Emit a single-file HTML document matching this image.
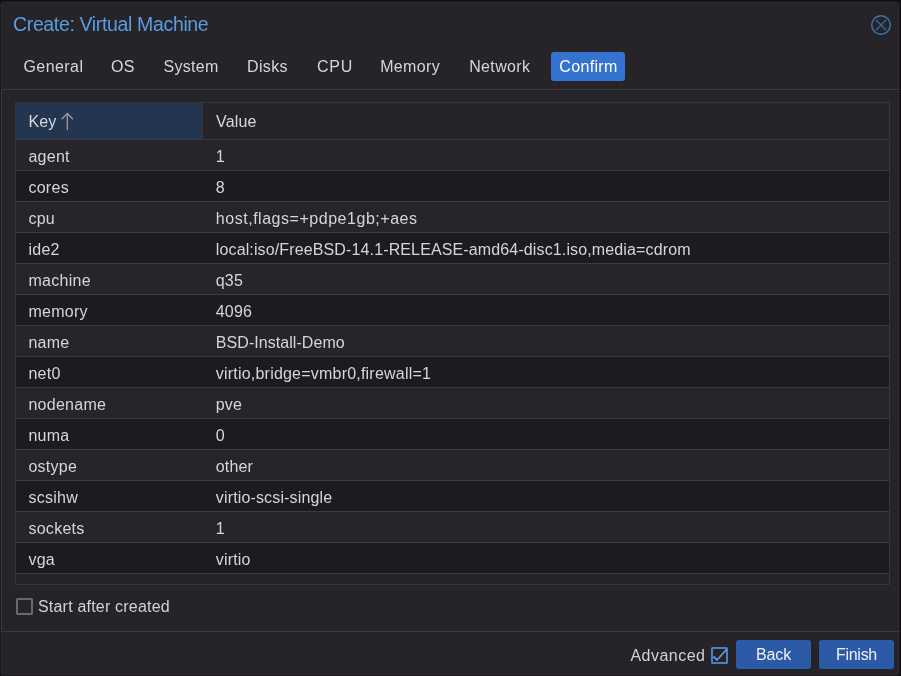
<!DOCTYPE html>
<html><head><meta charset="utf-8">
<style>
*{margin:0;padding:0;box-sizing:border-box}
html,body{width:901px;height:676px;overflow:hidden;background:#0f0e11;font-family:"Liberation Sans",sans-serif}
#root{position:absolute;left:0;top:0;width:901px;height:676px;will-change:transform}
.win{position:absolute;left:0;top:1px;width:900px;height:675px;background:#1c1b1e;border-radius:4px}
.hl{position:absolute;left:1px;top:2px;width:898px;height:673px;background:#2a282c;border-radius:3px}
.inner{position:absolute;left:2px;top:3px;width:896px;height:671px;background:#262428;border-radius:2px}
.abs{position:absolute;white-space:nowrap}
.title{left:13px;top:13px;font-size:19.5px;letter-spacing:-0.35px;color:#5a9cdf;line-height:22px}
.close{left:871px;top:15px;width:20px;height:20px}
.tab{top:52px;height:29px;line-height:29px;font-size:16px;letter-spacing:0.35px;color:#d6d6d6}
.tab.active{background:#3474d0;color:#fff;border-radius:3px;left:551px;width:74px;text-align:center;padding-left:1px}
.hline{position:absolute;height:1px;background:#3c3a3e}
.vline{position:absolute;width:1px;background:#3c3a3e}
.grid{position:absolute;left:15px;top:102px;width:875px;height:483px;border:1px solid #363438;background:#262428}
.hdr{position:absolute;left:0;top:0;width:873px;height:37px;border-bottom:1px solid #3c3a3e}
.hkey{position:absolute;left:0;top:0;width:186px;height:36px;background:#243550}
.hdiv{position:absolute;left:186px;top:0;width:1px;height:36px;background:#363438}
.row{position:absolute;left:0;width:873px;height:31px;border-bottom:1px solid #3c3a3e;font-size:16px;color:#d6d6d6;letter-spacing:0.15px}
.row.o{background:#272529}
.row.e{background:#1d1b1f}
.row span{position:absolute;top:2px;line-height:30px}
.row .k{left:12.4px;letter-spacing:0.28px}
.row .v{left:199.8px}
.htext{position:absolute;top:0;line-height:36px;font-size:16px;color:#d8d8d8;letter-spacing:0.15px}
.cb{position:absolute;width:17px;height:17px;border:2px solid #6a686c;border-radius:1.5px}
.btn{position:absolute;top:640px;width:75px;height:29px;background:#2b5ba6;border-radius:3px;color:#f0f0f0;font-size:16px;line-height:30px;text-align:center;letter-spacing:0.2px}
</style></head><body>
<div id="root">
<div class="win"></div>
<div class="hl"></div>
<div class="inner"></div>
<div class="abs title">Create: Virtual Machine</div>
<svg class="abs close" viewBox="0 0 20 20"><circle cx="10" cy="10" r="9.3" fill="none" stroke="#3c75b0" stroke-width="1.4"/><path d="M5 5L15 15M15 5L5 15" stroke="#37669c" stroke-width="1.4"/></svg>
<div class="abs tab" style="left:23.4px;letter-spacing:0.45px">General</div>
<div class="abs tab" style="left:111px">OS</div>
<div class="abs tab" style="left:163.5px;letter-spacing:0.3px">System</div>
<div class="abs tab" style="left:247px">Disks</div>
<div class="abs tab" style="left:317px;letter-spacing:0.7px">CPU</div>
<div class="abs tab" style="left:380.2px">Memory</div>
<div class="abs tab" style="left:469.2px">Network</div>
<div class="abs tab active">Confirm</div>
<div class="hline" style="left:1px;top:89px;width:898px"></div>
<div class="vline" style="left:1px;top:89px;height:543px"></div>
<div class="hline" style="left:1px;top:631px;width:898px"></div>
<div class="grid">
 <div class="hdr"><div class="hkey"></div><div class="hdiv"></div>
  <div class="htext" style="left:12.5px;top:1px">Key</div>
  <svg style="position:absolute;left:43px;top:8px" width="14" height="20" viewBox="0 0 14 20"><path d="M8.3 2.5V19M2.6 8.2L8.3 2.5L14 8.2" fill="none" stroke="#9c9a9e" stroke-width="1.3"/></svg>
  <div class="htext" style="left:200px;top:0.5px">Value</div>
 </div>
 <div class="row o" style="top:37px"><span class="k">agent</span><span class="v">1</span></div>
 <div class="row e" style="top:68px"><span class="k">cores</span><span class="v">8</span></div>
 <div class="row o" style="top:99px"><span class="k">cpu</span><span class="v" style="letter-spacing:0.53px">host,flags=+pdpe1gb;+aes</span></div>
 <div class="row e" style="top:130px"><span class="k">ide2</span><span class="v" style="letter-spacing:0.13px">local:iso/FreeBSD-14.1-RELEASE-amd64-disc1.iso,media=cdrom</span></div>
 <div class="row o" style="top:161px"><span class="k">machine</span><span class="v">q35</span></div>
 <div class="row e" style="top:192px"><span class="k">memory</span><span class="v">4096</span></div>
 <div class="row o" style="top:223px"><span class="k">name</span><span class="v" style="letter-spacing:0.06px">BSD-Install-Demo</span></div>
 <div class="row e" style="top:254px"><span class="k">net0</span><span class="v" style="letter-spacing:0.21px">virtio,bridge=vmbr0,firewall=1</span></div>
 <div class="row o" style="top:285px"><span class="k">nodename</span><span class="v">pve</span></div>
 <div class="row e" style="top:316px"><span class="k">numa</span><span class="v">0</span></div>
 <div class="row o" style="top:347px"><span class="k">ostype</span><span class="v">other</span></div>
 <div class="row e" style="top:378px"><span class="k">scsihw</span><span class="v">virtio-scsi-single</span></div>
 <div class="row o" style="top:409px"><span class="k">sockets</span><span class="v">1</span></div>
 <div class="row e" style="top:440px"><span class="k">vga</span><span class="v">virtio</span></div>
</div>
<div class="cb" style="left:16px;top:598px"></div>
<div class="abs" style="left:38px;top:597px;font-size:16px;letter-spacing:0.2px;line-height:20px;color:#d2d2d2">Start after created</div>
<div class="abs" style="left:630.4px;top:646px;font-size:16px;letter-spacing:0.48px;line-height:20px;color:#d2d2d2">Advanced</div>
<div class="cb" style="left:711px;top:647px;border-color:#4a80c4"></div>
<svg class="abs" style="left:711px;top:647px" width="17" height="17" viewBox="0 0 17 17"><path d="M2.5 9.5L6 13L16 2" fill="none" stroke="#5a9be0" stroke-width="1.8"/></svg>
<div class="btn" style="left:736px;letter-spacing:-0.1px">Back</div>
<div class="btn" style="left:819px;letter-spacing:-0.3px">Finish</div>
</div>
</body></html>
